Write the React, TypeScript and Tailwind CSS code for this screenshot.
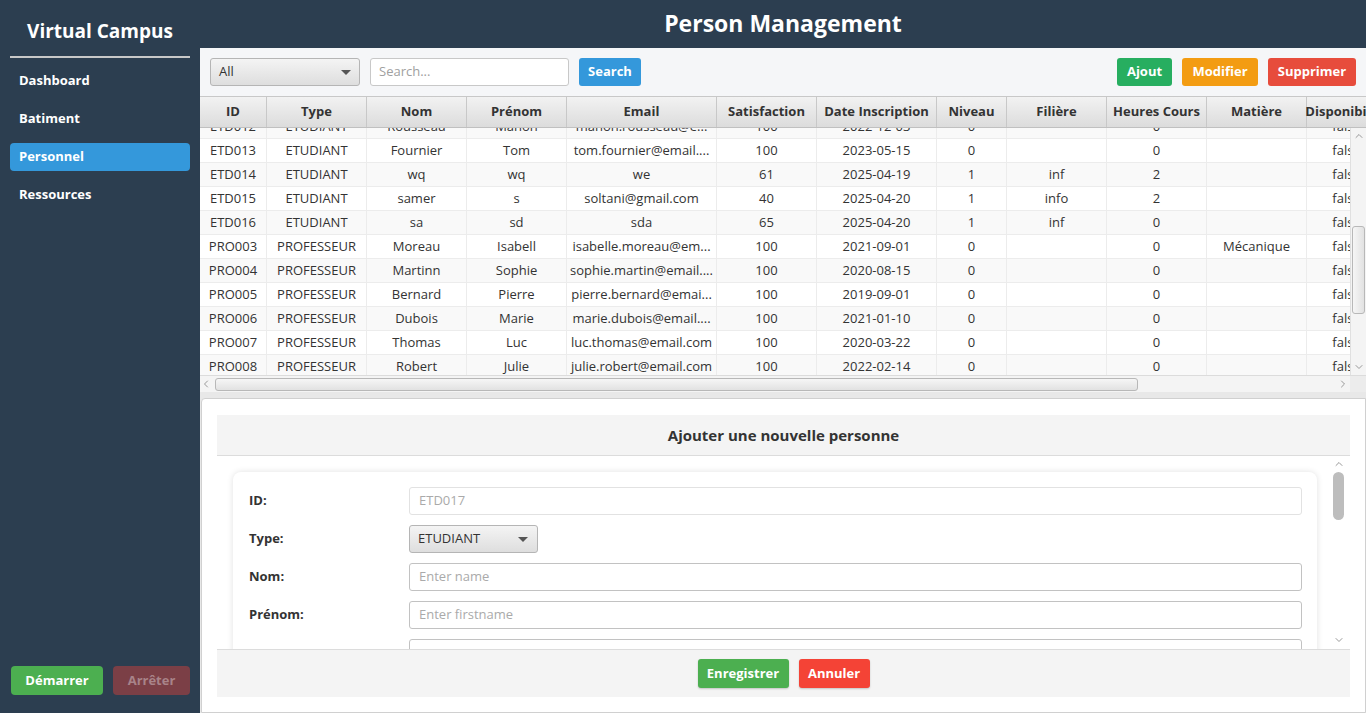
import { ChevronDown, ChevronLeft, ChevronRight, ChevronUp } from "lucide-react";

const font = { fontFamily: '"Open Sans", "Noto Sans", sans-serif' };

const columns = [
  { label: "ID", w: "w-[67px]" },
  { label: "Type", w: "w-[100px]" },
  { label: "Nom", w: "w-[100px]" },
  { label: "Prénom", w: "w-[100px]" },
  { label: "Email", w: "w-[150px]" },
  { label: "Satisfaction", w: "w-[100px]" },
  { label: "Date Inscription", w: "w-[120px]" },
  { label: "Niveau", w: "w-[70px]" },
  { label: "Filière", w: "w-[100px]" },
  { label: "Heures Cours", w: "w-[100px]" },
  { label: "Matière", w: "w-[100px]" },
  { label: "Disponibilité", w: "w-[80px]" },
];

const rows = [
  ["ETD012", "ETUDIANT", "Rousseau", "Manon", "manon.rousseau@e...", "100", "2022-12-03", "0", "", "0", "", "false"],
  ["ETD013", "ETUDIANT", "Fournier", "Tom", "tom.fournier@email....", "100", "2023-05-15", "0", "", "0", "", "false"],
  ["ETD014", "ETUDIANT", "wq", "wq", "we", "61", "2025-04-19", "1", "inf", "2", "", "false"],
  ["ETD015", "ETUDIANT", "samer", "s", "soltani@gmail.com", "40", "2025-04-20", "1", "info", "2", "", "false"],
  ["ETD016", "ETUDIANT", "sa", "sd", "sda", "65", "2025-04-20", "1", "inf", "0", "", "false"],
  ["PRO003", "PROFESSEUR", "Moreau", "Isabell", "isabelle.moreau@em...", "100", "2021-09-01", "0", "", "0", "Mécanique", "false"],
  ["PRO004", "PROFESSEUR", "Martinn", "Sophie", "sophie.martin@email....", "100", "2020-08-15", "0", "", "0", "", "false"],
  ["PRO005", "PROFESSEUR", "Bernard", "Pierre", "pierre.bernard@emai...", "100", "2019-09-01", "0", "", "0", "", "false"],
  ["PRO006", "PROFESSEUR", "Dubois", "Marie", "marie.dubois@email....", "100", "2021-01-10", "0", "", "0", "", "false"],
  ["PRO007", "PROFESSEUR", "Thomas", "Luc", "luc.thomas@email.com", "100", "2020-03-22", "0", "", "0", "", "false"],
  ["PRO008", "PROFESSEUR", "Robert", "Julie", "julie.robert@email.com", "100", "2022-02-14", "0", "", "0", "", "false"],
];

function Caret() {
  return <span className="w-0 h-0 border-l-[5px] border-r-[5px] border-t-[5px] border-l-transparent border-r-transparent border-t-[#555]" />;
}

function Sidebar() {
  const items = ["Dashboard", "Batiment", "Personnel", "Ressources"];
  return (
    <aside className="w-[200px] shrink-0 bg-[#2c3e50] flex flex-col px-[10px]">
      <h1 className="text-white font-bold text-[19px] text-center pt-[16px] pb-[10px] leading-[30px]">Virtual Campus</h1>
      <div className="h-[2px] bg-[#c8c8c8]" />
      <nav className="flex flex-col gap-[10px] mt-[9px]">
        {items.map((it) => (
          <div
            key={it}
            className={`h-[28px] flex items-center px-[9px] rounded-[4px] text-[13px] font-bold text-white ${
              it === "Personnel" ? "bg-[#3498db]" : ""
            }`}
          >
            {it}
          </div>
        ))}
      </nav>
      <div className="mt-auto mb-[18px] flex gap-[10px] pl-[1px]">
        <button className="w-[92px] h-[29px] rounded-[4px] bg-[#4caf50] text-white text-[13px] font-bold">Démarrer</button>
        <button className="w-[77px] h-[29px] rounded-[4px] bg-[#7b3f46] text-[#a88389] text-[13px] font-bold">Arrêter</button>
      </div>
    </aside>
  );
}

function Toolbar() {
  return (
    <div className="h-[48px] flex items-center px-[10px] gap-[10px] bg-[#f5f6f8]">
      <div className="w-[150px] h-[28px] rounded-[3px] border border-[#b5b5b5] bg-gradient-to-b from-[#f4f4f4] to-[#dedede] flex items-center justify-between px-[8px] text-[13px] text-[#333]">
        <span>All</span>
        <Caret />
      </div>
      <div className="w-[199px] h-[28px] rounded-[3px] border border-[#c8c8c8] bg-white flex items-center px-[8px] text-[13px] text-[#a0a0a0]">
        Search...
      </div>
      <button className="w-[62px] h-[28px] rounded-[3px] bg-[#3498db] text-white text-[13px] font-bold">Search</button>
      <div className="ml-auto flex gap-[10px]">
        <button className="w-[55px] h-[28px] rounded-[3px] bg-[#27ae60] text-white text-[13px] font-bold">Ajout</button>
        <button className="w-[76px] h-[28px] rounded-[3px] bg-[#f39c12] text-white text-[13px] font-bold">Modifier</button>
        <button className="w-[88px] h-[28px] rounded-[3px] bg-[#e74c3c] text-white text-[13px] font-bold">Supprimer</button>
      </div>
    </div>
  );
}

function Table() {
  return (
    <div className="h-[296px] border-t border-[#c8c8c8] bg-white flex flex-col overflow-hidden">
      <div className="flex h-[31px] shrink-0 overflow-hidden border-b border-[#c0c0c0] bg-gradient-to-b from-[#f2f2f2] to-[#dcdcdc]">
        {columns.map((c) => (
          <div
            key={c.label}
            className={`${c.w} shrink-0 border-r border-[#c8c8c8] flex items-center justify-center text-[13px] font-bold text-[#333] whitespace-nowrap`}
          >
            {c.label}
          </div>
        ))}
      </div>
      <div className="flex-1 flex min-h-0">
        <div className="flex-1 overflow-hidden">
          <div className="-mt-[13px]">
            {rows.map((r, i) => (
              <div key={r[0]} className={`flex h-[24px] border-b border-[#ececec] ${i % 2 === 0 ? "bg-[#f9f9f9]" : "bg-white"}`}>
                {r.map((cell, j) => (
                  <div
                    key={j}
                    className={`${columns[j].w} shrink-0 border-r border-[#ececec] flex items-center justify-center text-[13px] text-[#333] whitespace-nowrap overflow-hidden`}
                  >
                    {cell}
                  </div>
                ))}
              </div>
            ))}
          </div>
        </div>
        <div className="w-[16px] shrink-0 bg-[#f4f4f4] border-l border-[#e0e0e0] flex flex-col items-center">
          <ChevronUp size={12} className="text-[#999] mt-[2px]" />
          <div className="mt-[84px] w-[13px] h-[88px] rounded-[3px] border border-[#b8b8b8] bg-gradient-to-r from-[#f6f6f6] to-[#e2e2e2]" />
          <ChevronDown size={12} className="text-[#999] mt-auto mb-[2px]" />
        </div>
      </div>
      <div className="h-[17px] shrink-0 flex bg-[#f4f4f4] border-t border-[#dcdcdc]">
        <div className="w-[1150px] flex items-center">
          <ChevronLeft size={12} className="text-[#999]" />
          <div className="ml-[3px] w-[923px] h-[13px] rounded-[3px] border border-[#b8b8b8] bg-gradient-to-b from-[#f6f6f6] to-[#e2e2e2]" />
          <ChevronRight size={12} className="text-[#999] ml-auto mr-[1px]" />
        </div>
        <div className="flex-1 bg-[#ececec]" />
      </div>
    </div>
  );
}

function Field({ label, children }: { label: string; children: React.ReactNode }) {
  return (
    <div className="flex items-center h-[28px]">
      <div className="w-[160px] shrink-0 text-[13px] font-bold text-[#333]">{label}</div>
      {children}
    </div>
  );
}

function Form() {
  return (
    <div className="flex-1 mt-[6px] ml-[1px] bg-white border border-[#d0d0d0] rounded-tl-[4px] px-[15px] pt-[16px] pb-[15px] flex flex-col min-h-0">
      <div className="h-[41px] shrink-0 bg-[#f4f4f4] border-b border-[#dcdcdc] flex items-center justify-center text-[15px] font-bold text-[#333]">
        Ajouter une nouvelle personne
      </div>
      <div className="flex-1 flex min-h-0">
        <div className="flex-1 overflow-hidden pl-[16px] pr-[13px] pt-[16px]">
          <div className="bg-white rounded-[8px] shadow-[0_0_6px_rgba(0,0,0,0.12)] pl-[16px] pr-[15px] pt-[15px] pb-[20px] flex flex-col gap-[10px]">
            <Field label="ID:">
              <div className="flex-1 h-[28px] rounded-[3px] border border-[#e2e2e2] flex items-center px-[9px] text-[13px] text-[#aaa]">ETD017</div>
            </Field>
            <Field label="Type:">
              <div className="w-[129px] h-[28px] rounded-[3px] border border-[#b5b5b5] bg-gradient-to-b from-[#f4f4f4] to-[#dedede] flex items-center justify-between px-[8px] pr-[9px] text-[13px] text-[#333]">
                <span>ETUDIANT</span>
                <Caret />
              </div>
            </Field>
            <Field label="Nom:">
              <div className="flex-1 h-[28px] rounded-[3px] border border-[#c2c2c2] flex items-center px-[9px] text-[13px] text-[#aaa]">Enter name</div>
            </Field>
            <Field label="Prénom:">
              <div className="flex-1 h-[28px] rounded-[3px] border border-[#c2c2c2] flex items-center px-[9px] text-[13px] text-[#aaa]">Enter firstname</div>
            </Field>
            <Field label="">
              <div className="flex-1 h-[28px] rounded-[3px] border border-[#c2c2c2]" />
            </Field>
          </div>
        </div>
        <div className="w-[20px] shrink-0 flex flex-col items-center pr-[3px]">
          <ChevronUp size={12} className="text-[#999] mt-[2px]" />
          <div className="mt-[2px] w-[11px] h-[48px] rounded-full bg-[#bdbdbd]" />
          <ChevronDown size={12} className="text-[#999] mt-auto mb-[3px]" />
        </div>
      </div>
      <div className="h-[48px] shrink-0 bg-[#f4f4f4] border-t border-[#dcdcdc] flex items-center justify-center gap-[10px]">
        <button className="w-[91px] h-[29px] rounded-[3px] bg-[#4caf50] text-white text-[13px] font-bold shadow-[0_1px_2px_rgba(0,0,0,0.2)]">Enregistrer</button>
        <button className="w-[71px] h-[29px] rounded-[3px] bg-[#f44336] text-white text-[13px] font-bold shadow-[0_1px_2px_rgba(0,0,0,0.2)]">Annuler</button>
      </div>
    </div>
  );
}

export default function App() {
  return (
    <div className="w-[1366px] h-[713px] flex overflow-hidden" style={font}>
      <Sidebar />
      <main className="flex-1 flex flex-col bg-[#e8e8e8] min-w-0">
        <header className="h-[48px] shrink-0 bg-[#2c3e50] flex items-center justify-center text-white text-[23px] font-bold pb-[2px]">
          Person Management
        </header>
        <Toolbar />
        <Table />
        <Form />
      </main>
    </div>
  );
}
